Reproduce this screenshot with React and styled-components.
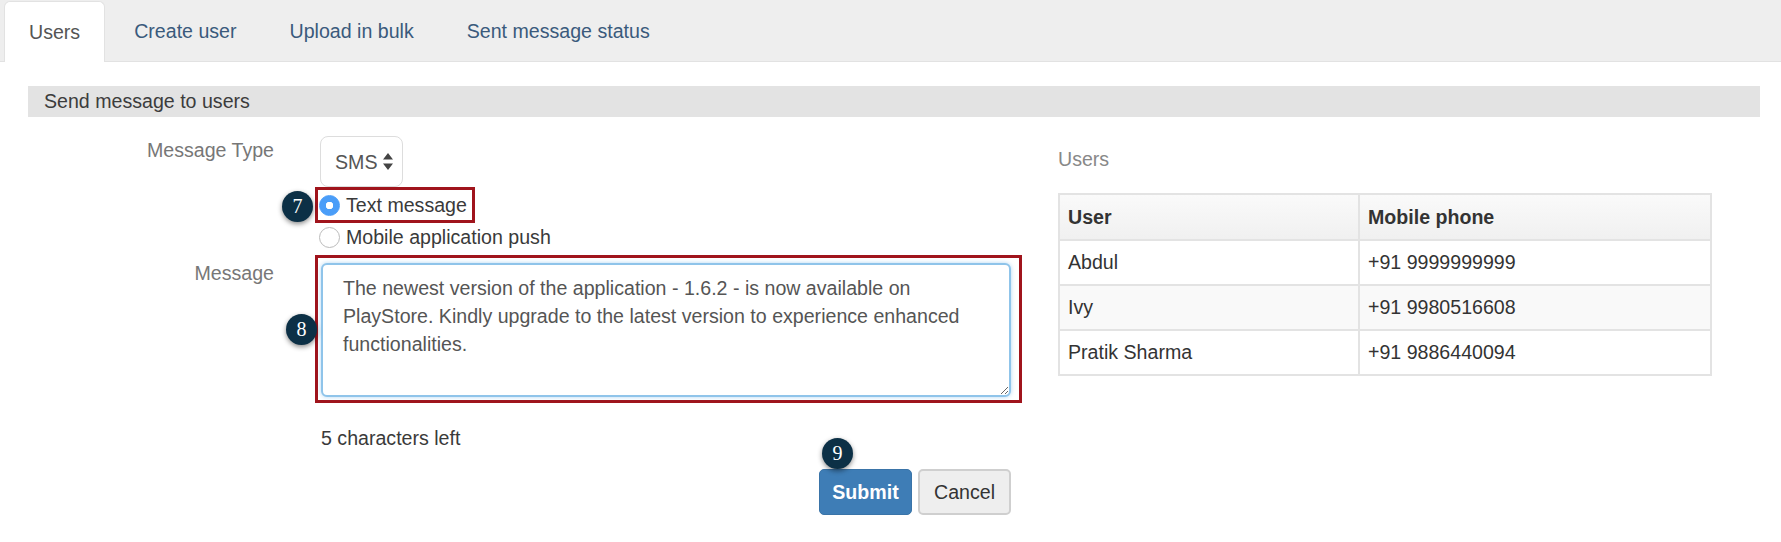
import styled, { createGlobalStyle } from 'styled-components';

const GlobalStyle = createGlobalStyle`
  html, body {
    margin: 0;
    padding: 0;
    background: #fff;
  }
  * {
    box-sizing: border-box;
  }
`

const users = [
  { name: "Abdul", phone: "+91 9999999999" },
  { name: "Ivy", phone: "+91 9980516608" },
  { name: "Pratik Sharma", phone: "+91 9886440094" },
]

const tabs = ["Users", "Create user", "Upload in bulk", "Sent message status"]

const message = "The newest version of the application - 1.6.2 - is now available on PlayStore. Kindly upgrade to the latest version to experience enhanced functionalities."

export default function App() {
  return (
    <Page>
      <GlobalStyle />
      <TabBar>
        {tabs.map((tab, i) => (
          <Tab key={tab} $active={i === 0}>{tab}</Tab>
        ))}
      </TabBar>

      <Content>
        <SectionTitle>Send message to users</SectionTitle>

        <Columns>
          <FormArea>
            <FormRow>
              <FieldLabel>Message Type</FieldLabel>
              <Controls>
                <SelectBox>
                  <Select defaultValue="SMS">
                    <option>SMS</option>
                  </Select>
                  <svg width="10" height="17" viewBox="0 0 10 17">
                    <path d="M5 0 L10 6.5 L0 6.5 Z M5 17 L0 10.5 L10 10.5 Z" fill="#444" />
                  </svg>
                </SelectBox>
                <RadioHighlight>
                  <Badge>7</Badge>
                  <RadioOption>
                    <Radio type="radio" name="kind" defaultChecked />
                    Text message
                  </RadioOption>
                </RadioHighlight>
                <PlainOption>
                  <Radio type="radio" name="kind" />
                  Mobile application push
                </PlainOption>
              </Controls>
            </FormRow>

            <FormRow>
              <MessageLabel>Message</MessageLabel>
              <Controls>
                <AreaHighlight>
                  <Badge $area>8</Badge>
                  <MessageBox readOnly value={message} />
                </AreaHighlight>
                <CharsLeft>5 characters left</CharsLeft>
              </Controls>
            </FormRow>

            <Actions>
              <SubmitWrap>
                <SubmitBadge>9</SubmitBadge>
                <Submit>Submit</Submit>
              </SubmitWrap>
              <Cancel>Cancel</Cancel>
            </Actions>
          </FormArea>

          <UsersPanel>
            <PanelTitle>Users</PanelTitle>
            <UsersTable>
              <thead>
                <tr>
                  <HeadCell $first>User</HeadCell>
                  <HeadCell>Mobile phone</HeadCell>
                </tr>
              </thead>
              <tbody>
                {users.map((u) => (
                  <UserRow key={u.name}>
                    <Cell>{u.name}</Cell>
                    <Cell>{u.phone}</Cell>
                  </UserRow>
                ))}
              </tbody>
            </UsersTable>
          </UsersPanel>
        </Columns>
      </Content>
    </Page>
  )
}

const Page = styled.div`
  width: 1781px;
  height: 542px;
  overflow: hidden;
  background: #fff;
  font-family: "Liberation Sans", Arial, sans-serif;
  font-size: 19.6px;
  color: #333;
`

const TabBar = styled.div`
  display: flex;
  align-items: flex-end;
  gap: 5px;
  height: 62px;
  padding: 1px 0 0 4px;
  background: #eeeeee;
  border-bottom: 1px solid #e2e2e2;
`

const Tab = styled.div`
  height: ${(p) => (p.$active ? "61px" : "60px")};
  margin-bottom: ${(p) => (p.$active ? "-1px" : "0")};
  padding: 0 24px;
  line-height: 60px;
  color: ${(p) => (p.$active ? "#555" : "#3a5a7c")};
  background: ${(p) => (p.$active ? "#fff" : "transparent")};
  border: ${(p) => (p.$active ? "1px solid #e2e2e2" : "none")};
  border-bottom: none;
  border-radius: 6px 6px 0 0;
`

const Content = styled.div`
  padding: 24px 21px 0 28px;
`

const SectionTitle = styled.div`
  height: 31px;
  padding-left: 16px;
  line-height: 31px;
  background: #e3e3e3;
  color: #3c3c3c;
`

const Columns = styled.div`
  display: flex;
  align-items: flex-start;
`

const FormArea = styled.div`
  width: 994px;
  padding-top: 19px;
`

const FormRow = styled.div`
  display: grid;
  grid-template-columns: 246px 1fr;
  column-gap: 41px;
`

const FieldLabel = styled.div`
  text-align: right;
  color: #777;
  line-height: 28px;
`

const MessageLabel = styled(FieldLabel)`
  padding-top: 8px;
`

const Controls = styled.div`
  display: flex;
  flex-direction: column;
  align-items: flex-start;
`

const SelectBox = styled.div`
  display: flex;
  align-items: center;
  gap: 5px;
  width: 83px;
  height: 51px;
  margin-left: 5px;
  padding-left: 14px;
  background: #fff;
  border: 1px solid #ddd;
  border-radius: 8px;
`

const Select = styled.select`
  appearance: none;
  border: none;
  padding: 0;
  background: transparent;
  font: inherit;
  color: #555;
`

const RadioHighlight = styled.div`
  position: relative;
  width: 160px;
  height: 36px;
  border: 3px solid #a0141c;
`

const RadioOption = styled.label`
  display: flex;
  align-items: center;
  height: 30px;
  gap: 6px;
  color: #3a3a3a;
`

const PlainOption = styled(RadioOption)`
  height: 28px;
  padding-left: 3px;
`

const Radio = styled.input`
  appearance: none;
  flex: none;
  width: 21px;
  height: 21px;
  margin: 0 0 0 1px;
  background: #fff;
  border: 1px solid #bbb;
  border-radius: 50%;

  &:checked {
    background: radial-gradient(circle, #fff 0 3.5px, #4a9df8 4px);
    border-color: #4a9df8;
  }
`

const Badge = styled.span`
  position: absolute;
  top: ${(p) => (p.$area ? "56px" : "1px")};
  left: ${(p) => (p.$area ? "-32px" : "-36px")};
  width: 31px;
  height: 31px;
  line-height: 31px;
  text-align: center;
  border-radius: 50%;
  background: #0c3046;
  color: #fff;
  font-family: "Liberation Serif", serif;
  font-size: 20px;
  box-shadow: 0 2px 5px rgba(0, 0, 0, 0.45);
  z-index: 1;
`

const AreaHighlight = styled.div`
  position: relative;
  width: 707px;
  height: 148px;
  margin-top: 4px;
  padding: 5px 8px 3px 3px;
  border: 3px solid #a0141c;
`

const MessageBox = styled.textarea`
  display: block;
  width: 100%;
  height: 100%;
  padding: 9px 20px;
  font: inherit;
  line-height: 28px;
  color: #555;
  background: #fff;
  border: 2px solid #8fc4ea;
  border-radius: 6px;
  box-shadow: 0 0 4px rgba(102, 175, 233, 0.5);
  outline: none;
  resize: both;
`

const CharsLeft = styled.div`
  margin: 21px 0 0 6px;
  line-height: 28px;
  color: #3a3a3a;
`

const Actions = styled.div`
  display: flex;
  justify-content: flex-end;
  gap: 6px;
  padding-right: 11px;
  margin-top: 17px;
`

const SubmitWrap = styled.div`
  position: relative;
`

const SubmitBadge = styled(Badge)`
  top: -31px;
  left: 3px;
`

const Button = styled.button`
  display: block;
  width: 93px;
  height: 46px;
  padding: 0;
  font: inherit;
  border-radius: 5px;
`

const Submit = styled(Button)`
  background: #3e7db6;
  border: 1px solid #3a74a8;
  color: #fff;
  font-weight: 700;
`

const Cancel = styled(Button)`
  background: #eeeeee;
  border: 2px solid #cfcfcf;
  color: #333;
`

const UsersPanel = styled.div`
  width: 654px;
  margin-left: 36px;
  padding-top: 30px;
`

const PanelTitle = styled.div`
  color: #888;
  line-height: 24px;
  margin-bottom: 22px;
`

const UsersTable = styled.table`
  width: 100%;
  border-collapse: collapse;
  border: 2px solid #e3e3e3;
`

const HeadCell = styled.th`
  height: 46px;
  width: ${(p) => (p.$first ? "300px" : "auto")};
  padding: 0 8px;
  text-align: left;
  font-weight: 700;
  color: #333;
  background: linear-gradient(#fafafa, #f0f0f0);
  border: 2px solid #e3e3e3;
`

const UserRow = styled.tr`
  &:nth-child(even) {
    background: #f9f9f9;
  }
`

const Cell = styled.td`
  height: 45px;
  padding: 0 8px;
  color: #333;
  border: 2px solid #e3e3e3;
`
